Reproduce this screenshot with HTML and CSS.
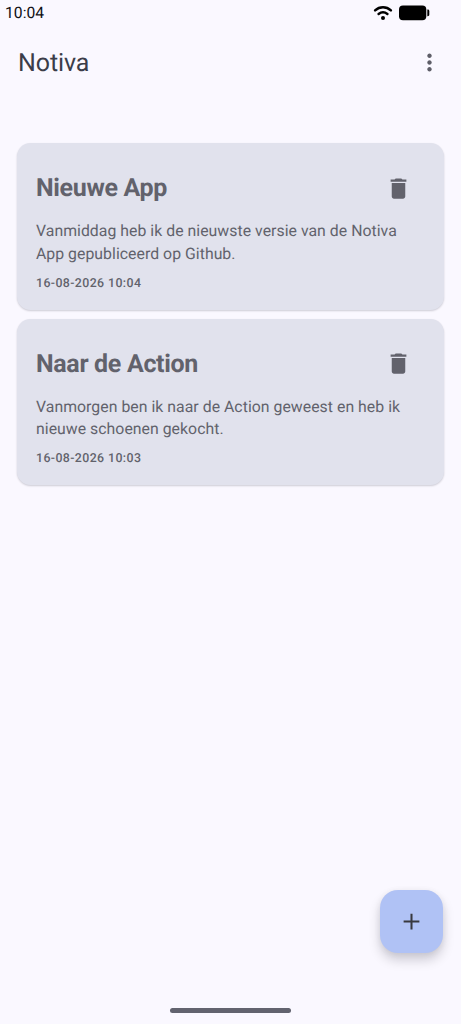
FILE: index.html
```html
<!DOCTYPE html>
<html lang="nl">
<head>
<meta charset="utf-8">
<title>Notiva</title>
<link rel="stylesheet" href="styles.css">
</head>
<body>
<div class="screen">
  <header class="status-bar">
    <span class="clock">10:04</span>
    <div class="status-icons">
      <svg class="wifi" viewBox="0 0 20 16" fill="none" stroke="#000" stroke-width="2.5" stroke-linecap="round">
        <path d="M2.1 5.4C6.7 1.2 13.3 1.2 17.9 5.4"/>
        <path d="M5.6 8.9C8.2 6.9 11.8 6.9 14.4 8.9"/>
        <circle cx="10" cy="13" r="2" fill="#000" stroke="none"/>
      </svg>
      <svg class="battery" viewBox="0 0 31 16">
        <rect x="0" y="0.5" width="27.3" height="14.8" rx="4"/>
        <path d="M28.3 4.6h.5c.9 0 1.500.7 1.500 1.600v3.400c0 .9-.6 1.600-1.500 1.600h-.5z"/>
      </svg>
    </div>
  </header>
  <div class="app-bar">
    <h1 class="app-title">Notiva</h1>
    <svg class="more" viewBox="0 0 24 24"><path d="M12 8c1.1 0 2-.9 2-2s-.9-2-2-2-2 .9-2 2 .9 2 2 2zm0 2c-1.1 0-2 .9-2 2s.9 2 2 2 2-.9 2-2-.9-2-2-2zm0 6c-1.1 0-2 .9-2 2s.9 2 2 2 2-.9 2-2-.9-2-2-2z"/></svg>
  </div>
  <main class="notes">
    <article class="note">
      <div class="note-head">
        <h2 class="note-title">Nieuwe App</h2>
        <svg class="trash" viewBox="0 0 24 24"><path d="M6 19c0 1.1.9 2 2 2h8c1.1 0 2-.9 2-2V7H6v12zM19 4h-3.500l-1-1h-5l-1 1H5v2h14V4z"/></svg>
      </div>
      <p class="note-text">Vanmiddag heb ik de nieuwste versie van de Notiva<br>App gepubliceerd op Github.</p>
      <time class="note-date">16-08-2026 10:04</time>
    </article>
    <article class="note">
      <div class="note-head">
        <h2 class="note-title">Naar de Action</h2>
        <svg class="trash" viewBox="0 0 24 24"><path d="M6 19c0 1.1.9 2 2 2h8c1.1 0 2-.9 2-2V7H6v12zM19 4h-3.500l-1-1h-5l-1 1H5v2h14V4z"/></svg>
      </div>
      <p class="note-text">Vanmorgen ben ik naar de Action geweest en heb ik<br>nieuwe schoenen gekocht.</p>
      <time class="note-date">16-08-2026 10:03</time>
    </article>
  </main>
  <footer class="bottom">
    <button class="fab" aria-label="Nieuwe notitie">
      <svg class="plus" viewBox="0 0 24 24"><path d="M19 12.9h-6.100v6.100h-1.800v-6.100H5v-1.800h6.100V5h1.800v6.100H19z"/></svg>
    </button>
    <div class="home-handle"></div>
  </footer>
</div>
</body>
</html>
```
FILE: styles.css
```css
* { box-sizing: border-box; }
body {
  margin: 0;
  background: #faf8ff;
  font-family: Roboto, sans-serif;
  color: #62626c;
  text-rendering: geometricPrecision;
}
.screen {
  display: flex;
  flex-direction: column;
  height: 1024px;
  overflow: hidden;
}
.status-bar {
  display: flex;
  justify-content: space-between;
  align-items: center;
  height: 26px;
  padding: 0 31px 0 5px;
}
.clock {
  font-size: 15.7px;
  line-height: 26px;
  color: #101014;
}
.status-icons { display: flex; align-items: center; gap: 6px; }
.wifi { width: 20px; height: 16px; }
.battery { width: 31px; height: 16px; }
.app-bar {
  display: flex;
  justify-content: space-between;
  align-items: center;
  height: 73px;
  padding: 0 18px;
}
.app-title {
  margin: 0;
  padding-top: 2px;
  font-size: 25px;
  line-height: 32px;
  font-weight: 400;
  letter-spacing: -.1px;
  color: #3b3d49;
}
.more { width: 27px; height: 27px; fill: #5e5e68; }
.notes {
  display: flex;
  flex-direction: column;
  gap: 9px;
  padding: 44px 17px 0;
}
.note {
  height: 166.500px;
  padding: 18px 19px;
  border-radius: 13.5px;
  background: #e1e2ed;
  box-shadow: 0 1px 2px rgba(0, 0, 20, .18);
}
.note-head {
  display: flex;
  justify-content: space-between;
  align-items: center;
  height: 54px;
  padding-right: 13px;
}
.note-title {
  margin: 0;
  padding-top: 2px;
  font-size: 25px;
  line-height: 32px;
  font-weight: 700;
  letter-spacing: -.33px;
}
.trash { width: 27px; height: 27px; fill: #62626c; }
.note-text {
  margin: 5px 0 0;
  font-size: 15.8px;
  line-height: 22.5px;
  letter-spacing: .04px;
  white-space: nowrap;
}
.note-date {
  display: block;
  margin-top: 9.5px;
  font-size: 12.35px;
  line-height: 18px;
  font-weight: 500;
  letter-spacing: .4px;
}
.bottom {
  display: flex;
  flex-direction: column;
  margin-top: auto;
  padding-bottom: 11px;
}
.fab {
  display: grid;
  place-items: center;
  align-self: flex-end;
  width: 63px;
  height: 63px;
  margin: 0 18px 55px 0;
  padding: 0 0 1px;
  border: 0;
  border-radius: 18px;
  background: #b0c2f5;
  box-shadow: 0 7px 12px rgba(0, 0, 20, .18), 0 1px 6px rgba(0, 0, 20, .06);
}
.plus { width: 27px; height: 27px; fill: #38393f; }
.home-handle {
  align-self: center;
  width: 121px;
  height: 5px;
  border-radius: 3px;
  background: #62636f;
}
```
